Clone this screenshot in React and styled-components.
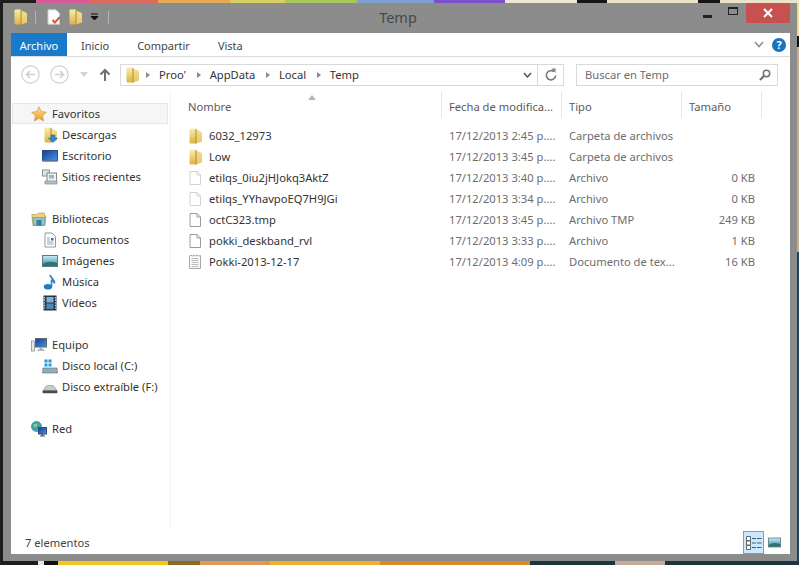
import React from "react";
import styled, { createGlobalStyle } from "styled-components";

const GlobalStyle = createGlobalStyle`
  html, body {
    margin: 0;
    padding: 0;
    background: #222;
  }
  * {
    box-sizing: border-box;
  }
`;

const Desktop = styled.div`
  width: 799px;
  height: 565px;
  overflow: hidden;
  font-family: "Noto Sans", "Open Sans", sans-serif;
  font-size: 11.2px;
  padding: 3px 2px 4px 3px;
  background:
    linear-gradient(90deg, #1d1d1d 0 36px, #d85a9a 36px 90px, #dd6a5c 90px 158px, #e8a85a 158px 230px,
      #d9cf62 230px 285px, #a8c85c 285px 357px, #7f9fd0 357px 434px, #7a4fc8 434px 505px,
      #ece8d4 505px 577px, #151515 577px 607px, #ece4c8 607px 698px, #151515 698px 720px, #ece4c8 720px)
      top / 100% 3px no-repeat,
    linear-gradient(90deg, #1d1d1d 0 38px, #e8e8d8 38px 44px, #111 44px 58px, #f2c81c 58px 168px,
      #8a6a20 168px 200px, #e09a50 200px 270px, #eeb030 270px 380px, #d98a28 380px 530px,
      #1c3440 530px 615px, #c8a898 615px 665px, #1c3440 665px)
      bottom / 100% 4px no-repeat,
    linear-gradient(180deg, #e8dc90 0 36px, #111 36px 47px, #c4ac8c 47px 252px, #1c4458 252px)
      right / 2px 100% no-repeat,
    #1d1d1d;
`;

const Window = styled.div`
  height: 100%;
  background: #8c8c8c;
  display: flex;
  flex-direction: column;
  padding: 0 7px 7px 8px;
`;

const TitleBar = styled.div`
  height: 30px;
  flex: none;
  display: grid;
  grid-template-columns: 1fr auto 1fr;
  align-items: start;
`;

const QuickAccess = styled.div`
  display: flex;
  align-items: center;
  height: 30px;
  padding: 0 0 2px 1px;
`;

const QuickSep = styled.span`
  width: 1px;
  height: 13px;
  background: #b4b4b4;
  margin: 0 ${(p) => p.$right}px 0 ${(p) => p.$left}px;
`;

const QuickSlot = styled.span`
  display: flex;
  margin-left: ${(p) => p.$left}px;
`;

const Title = styled.div`
  font-size: 14.5px;
  line-height: 29px;
  padding-right: 5px;
  color: #484848;
`;

const Controls = styled.div`
  display: flex;
  justify-content: flex-end;
  align-items: flex-start;
`;

const ControlButton = styled.div`
  width: ${(p) => p.$w}px;
  height: 20px;
  display: flex;
  align-items: center;
  justify-content: center;
  background: ${(p) => p.$bg || "transparent"};
`;

const MinGlyph = styled.span`
  width: 9px;
  height: 3px;
  background: #222;
  margin-top: 7px;
`;

const MaxGlyph = styled.span`
  width: 10px;
  height: 8px;
  border: 1px solid #222;
  border-top-width: 2px;
  margin-top: -4px;
`;

const Shell = styled.div`
  flex: 1;
  min-height: 0;
  background: #fff;
  display: flex;
  flex-direction: column;
  color: #3a3a3a;
`;

const Ribbon = styled.div`
  height: 24px;
  flex: none;
  display: flex;
  align-items: stretch;
  border-bottom: 1px solid #dadbdc;
`;

const Tab = styled.div`
  width: ${(p) => (p.$active ? "56px" : "auto")};
  padding: 2px ${(p) => (p.$active ? 0 : 14)}px 0;
  line-height: 22px;
  font-size: 11px;
  text-align: center;
  color: ${(p) => (p.$active ? "#fff" : "#444")};
  background: ${(p) => (p.$active ? "#1979ca" : "transparent")};
`;

const RibbonEnd = styled.div`
  margin-left: auto;
  display: flex;
  align-items: center;
  gap: 8px;
  padding-right: 4px;
`;

const HelpBadge = styled.span`
  width: 14px;
  height: 14px;
  border-radius: 50%;
  background: #1a72bd;
  color: #fff;
  font-size: 11px;
  font-weight: 700;
  line-height: 14px;
  text-align: center;
`;

const NavRow = styled.div`
  height: 35px;
  flex: none;
  display: flex;
  align-items: center;
  padding: 0 12px 0 10px;
`;

const NavIcon = styled.svg`
  flex: none;
  width: ${(p) => p.$w}px;
  height: ${(p) => p.$h}px;
  margin-right: ${(p) => p.$gap}px;
`;

const AddressBar = styled.div`
  width: 444px;
  height: 22px;
  border: 1px solid #d9d9d9;
  display: flex;
  align-items: center;
  padding-left: 3px;
  color: #333;
`;

const Crumb = styled.span`
  display: inline-flex;
  align-items: center;
  gap: 9px;
  margin-right: 4.6px;
`;

const CrumbArrow = styled.span`
  width: 0;
  height: 0;
  margin-left: 6px;
  border-left: 4px solid #8a8a8a;
  border-top: 3.5px solid transparent;
  border-bottom: 3.5px solid transparent;
`;

const AddressEnd = styled.div`
  margin-left: auto;
  display: flex;
  align-items: center;
  height: 100%;
`;

const RefreshCell = styled.div`
  width: 26px;
  height: 100%;
  margin-left: 5px;
  border-left: 1px solid #d9d9d9;
  display: flex;
  align-items: center;
  justify-content: center;
`;

const SearchBox = styled.div`
  width: 202px;
  height: 22px;
  margin-left: 12px;
  border: 1px solid #d9d9d9;
  display: flex;
  align-items: center;
  justify-content: space-between;
  padding: 0 6px 0 8px;
  color: #6d6d6d;
`;

const Main = styled.div`
  flex: 1;
  min-height: 0;
  display: flex;
`;

const Sidebar = styled.nav`
  width: 160px;
  flex: none;
  padding: 11px 0 0 1px;
  border-right: 1px solid #f3f3f3;
`;

const NavGroup = styled.div`
  margin-bottom: 21px;
`;

const NavItem = styled.div`
  width: 156px;
  height: 21px;
  display: flex;
  align-items: center;
  gap: ${(p) => (p.$child ? 4 : 5)}px;
  padding-left: ${(p) => (p.$child ? 30 : 19)}px;
  color: #333;
  background: ${(p) => (p.$selected ? "#f5f6f7" : "transparent")};
  box-shadow: ${(p) => (p.$selected ? "inset 0 0 0 1px #e6e6e6" : "none")};
`;

const Content = styled.section`
  flex: 1;
  min-width: 0;
  display: flex;
  flex-direction: column;
`;

const ColumnHeader = styled.div`
  position: relative;
  height: 33px;
  display: grid;
  grid-template-columns: 271px 120px 120px 80px;
  color: #5a5a5a;
`;

const HeaderCell = styled.div`
  height: 26px;
  padding: 7px 0 0 ${(p) => p.$pad}px;
  line-height: 16px;
  border-right: 1px solid #e6e6e6;
`;

const SortMark = styled.svg`
  position: absolute;
  left: 137px;
  top: 3px;
`;

const FileRow = styled.div`
  height: 21px;
  display: grid;
  grid-template-columns: 271px 120px 120px 80px;
  align-items: center;
`;

const NameCell = styled.div`
  display: flex;
  align-items: center;
  gap: 6px;
  padding-left: 16px;
  color: #333;
`;

const InfoCell = styled.div`
  padding-left: 7px;
  color: #6d6d6d;
  white-space: nowrap;
`;

const SizeCell = styled.div`
  padding-right: 7px;
  text-align: right;
  color: #6d6d6d;
`;

const StatusBar = styled.div`
  height: 24px;
  flex: none;
  display: flex;
  align-items: flex-start;
  justify-content: space-between;
  padding: 1px 9px 0 14px;
  color: #444;
`;

const StatusText = styled.span`
  line-height: 24px;
`;

const ViewToggle = styled.div`
  display: flex;
  align-items: center;
  gap: 4px;
`;

const ViewButton = styled.div`
  width: ${(p) => (p.$active ? 21 : 13)}px;
  height: 23px;
  display: flex;
  align-items: center;
  justify-content: center;
  background: ${(p) => (p.$active ? "#cce8ff" : "transparent")};
  box-shadow: ${(p) => (p.$active ? "inset 0 0 0 1px #63a9c9" : "none")};
`;

const Glyph = styled.svg`
  flex: none;
  display: block;
`;

const Defs = styled.svg`
  position: absolute;
  width: 0;
  height: 0;
`;

const SharedGradients = () => (
  <Defs aria-hidden="true">
    <defs>
      <linearGradient id="goldLeft" x1="0" y1="0" x2="0" y2="1">
        <stop offset="0" stopColor="#f9efae" />
        <stop offset="1" stopColor="#dcb243" />
      </linearGradient>
      <linearGradient id="goldRight" x1="0" y1="0" x2="0" y2="1">
        <stop offset="0" stopColor="#f3e08f" />
        <stop offset="1" stopColor="#e5c766" />
      </linearGradient>
      <linearGradient id="screen" x1="0" y1="0" x2="1" y2="1">
        <stop offset="0" stopColor="#123c9c" />
        <stop offset="1" stopColor="#4a94e0" />
      </linearGradient>
      <linearGradient id="photo" x1="0" y1="0" x2="0" y2="1">
        <stop offset="0" stopColor="#d5ecf4" />
        <stop offset="0.55" stopColor="#6fb5c9" />
        <stop offset="1" stopColor="#2f7f80" />
      </linearGradient>
      <linearGradient id="star" x1="0" y1="0" x2="0" y2="1">
        <stop offset="0" stopColor="#ffe48a" />
        <stop offset="1" stopColor="#eb9a2c" />
      </linearGradient>
    </defs>
  </Defs>
);

const FolderShape = () => (
  <>
    <path d="M2.5 1.5 Q2.5 .5 4 .5 H9 V15.5 H4 Q2.5 15.5 2.5 14 Z" fill="url(#goldLeft)" />
    <path d="M9 1.5 L14 3.5 Q15 4 15 5 V13.5 L9 15.5 Z" fill="url(#goldRight)" />
    <path d="M9 1 V15.5" stroke="#b18a2e" strokeWidth="1" />
  </>
);

const PageShape = ({ stroke = "#9c9c9c" }) => (
  <path d="M3 1.5 H10 L13.5 5 V14.5 H3 Z M10 1.5 V5 H13.5" fill="#fff" stroke={stroke} strokeWidth="1" />
);

const icons = {
  folder: <FolderShape />,
  file: <PageShape />,
  faintFile: <PageShape stroke="#d2d2d2" />,
  textFile: (
    <>
      <path d="M2.5 2 L4 1.2 L5.5 2 L7 1.2 L8.5 2 L10 1.2 L11.5 2 L13.5 1.5 V14.5 H2.5 Z" fill="#fafafa" stroke="#a8a8a8" />
      <path d="M4.5 4.5 H11.5 M4.5 6.5 H11.5 M4.5 8.5 H11.5 M4.5 10.5 H11.5 M4.5 12.5 H11.5" stroke="#bdbdbd" />
    </>
  ),
  star: (
    <path
      d="M8 .8 L10.2 5.6 L15.4 6.2 L11.5 9.7 L12.6 15 L8 12.3 L3.4 15 L4.5 9.7 L.6 6.2 L5.8 5.6 Z"
      fill="url(#star)"
      stroke="#c98a3a"
      strokeWidth="0.6"
    />
  ),
  downloads: (
    <>
      <FolderShape />
      <path d="M9 8 H13 V11 H15.5 L11 15.5 L6.5 11 H9 Z" fill="#2f86cf" stroke="#1c5e9c" strokeWidth="0.5" />
    </>
  ),
  desktop: (
    <>
      <rect x="0.5" y="2.5" width="15" height="10" fill="url(#screen)" stroke="#2b4a7e" />
      <rect x="0.5" y="12.5" width="15" height="1.5" fill="#8c9bb0" />
    </>
  ),
  recent: (
    <>
      <rect x="0.5" y="1" width="7" height="6" fill="#dfe4e6" stroke="#8a9294" />
      <rect x="5" y="4" width="9.5" height="8.5" fill="#eef1f2" stroke="#7f8a8c" />
      <rect x="7" y="6" width="5" height="3.5" fill="#9fb4bd" />
      <path d="M3 12 H15 V15 H3 Z" fill="#b9c0c2" stroke="#7f8a8c" strokeWidth="0.7" />
    </>
  ),
  library: (
    <>
      <path d="M.8 3.5 H6 L7.5 2 H13.5 V5 H15 L14 14.5 H2 Z" fill="#ecd27d" stroke="#b89236" strokeWidth="0.6" />
      <path d="M1.8 6.5 H14.2 L13.4 14.5 H2.6 Z" fill="#8fc4d4" stroke="#4f8ea3" strokeWidth="0.6" />
      <rect x="5.5" y="9" width="5" height="5.5" fill="#3d7f93" />
    </>
  ),
  documents: (
    <>
      <path d="M3 1 H10 L13.5 4.5 V15 H3 Z" fill="#fff" stroke="#8d98a0" />
      <path d="M5 6 H8 M5 8 H8 M5 10 H11.5 M5 12 H11.5" stroke="#9aa5ad" />
      <rect x="9" y="6" width="2.5" height="2.5" fill="#2f74b8" />
    </>
  ),
  images: (
    <>
      <rect x="0.5" y="2.5" width="15" height="11" fill="url(#photo)" stroke="#5b7a80" />
      <path d="M1 11 Q6 7 15 10 V13 H1 Z" fill="#2d7572" />
    </>
  ),
  music: (
    <>
      <path d="M8 1 C8.5 4 13 5 12.5 9.5 C12 7.5 10.5 6.5 9.5 6.4 V12.5" fill="none" stroke="#2f86cf" strokeWidth="1.6" />
      <ellipse cx="6" cy="12.7" rx="4.2" ry="2.8" fill="#1f7cc7" />
    </>
  ),
  videos: (
    <>
      <rect x="1.5" y="0.5" width="13" height="15" fill="#26364a" />
      <rect x="4.5" y="2" width="7" height="5.5" fill="#7eb1d6" />
      <rect x="4.5" y="8.5" width="7" height="5.5" fill="#4d87b5" />
      <path d="M2.5 2 V14 M13.5 2 V14" stroke="#c7d3dc" strokeWidth="1.2" strokeDasharray="1.4 1.2" />
    </>
  ),
  computer: (
    <>
      <rect x="0.5" y="4" width="3" height="10" fill="#e4e8ea" stroke="#7c8588" strokeWidth="0.7" />
      <rect x="4.5" y="1.5" width="11" height="8.5" fill="url(#screen)" stroke="#5a6670" />
      <path d="M8.5 10 H11.5 V12.5 H13.5 V14 H6.5 V12.5 H8.5 Z" fill="#a9b2b7" />
    </>
  ),
  localDisk: (
    <>
      <path d="M1 10 H15 L15.5 15 H.5 Z" fill="#a2aaad" stroke="#5f686b" strokeWidth="0.6" />
      <rect x="3" y="12" width="6" height="1.2" fill="#59b8d8" />
      <path d="M2.5 1.5 H5.5 V4.5 H2.5 Z M6.5 1.5 H9.5 V4.5 H6.5 Z M2.5 5.5 H5.5 V8.5 H2.5 Z M6.5 5.5 H9.5 V8.5 H6.5 Z" fill="#1f9be0" />
    </>
  ),
  removable: (
    <>
      <path d="M3.5 8 Q4 6.5 6 6.5 H10 Q12 6.5 12.5 8 L15 11.5 H1 Z" fill="#c9cccd" stroke="#777" strokeWidth="0.5" />
      <rect x="0.5" y="11.5" width="15" height="2.8" rx="1" fill="#4a4a4a" />
    </>
  ),
  network: (
    <>
      <circle cx="5.5" cy="5.5" r="5" fill="#3fa4b4" stroke="#27707e" strokeWidth="0.6" />
      <path d="M2.5 3.5 Q5 2 6.5 4 Q5 6.5 3 6 Z M7 7 L9 8 L7.5 10 Z" fill="#9ad07a" />
      <rect x="7.5" y="6.5" width="8" height="6.5" fill="url(#screen)" stroke="#35506e" />
      <path d="M10.5 13 H12.5 V14.5 H14 V15.5 H9 V14.5 H10.5 Z" fill="#4d5c6b" />
    </>
  ),
  checkDoc: (
    <>
      <path d="M2 .8 H10 L13.5 4.3 V15.2 H2 Z" fill="#fff" stroke="#c9c9c9" />
      <path d="M6.5 11 L8.8 13.5 L14 8" fill="none" stroke="#dd5a2c" strokeWidth="2" />
    </>
  ),
};

const Icon = ({ name, size = 16 }) => (
  <Glyph width={size} height={size} viewBox="0 0 16 16" aria-hidden="true">
    {icons[name]}
  </Glyph>
);

const favorites = [
  { icon: "downloads", label: "Descargas" },
  { icon: "desktop", label: "Escritorio" },
  { icon: "recent", label: "Sitios recientes" },
];

const libraries = [
  { icon: "documents", label: "Documentos" },
  { icon: "images", label: "Imágenes" },
  { icon: "music", label: "Música" },
  { icon: "videos", label: "Vídeos" },
];

const drives = [
  { icon: "localDisk", label: "Disco local (C:)" },
  { icon: "removable", label: "Disco extraíble (F:)" },
];

const files = [
  { icon: "folder", name: "6032_12973", date: "17/12/2013 2:45 p....", type: "Carpeta de archivos", size: "" },
  { icon: "folder", name: "Low", date: "17/12/2013 3:45 p....", type: "Carpeta de archivos", size: "" },
  { icon: "faintFile", name: "etilqs_0iu2jHJokq3AktZ", date: "17/12/2013 3:40 p....", type: "Archivo", size: "0 KB" },
  { icon: "faintFile", name: "etilqs_YYhavpoEQ7H9JGi", date: "17/12/2013 3:34 p....", type: "Archivo", size: "0 KB" },
  { icon: "file", name: "octC323.tmp", date: "17/12/2013 3:45 p....", type: "Archivo TMP", size: "249 KB" },
  { icon: "file", name: "pokki_deskband_rvl", date: "17/12/2013 3:33 p....", type: "Archivo", size: "1 KB" },
  { icon: "textFile", name: "Pokki-2013-12-17", date: "17/12/2013 4:09 p....", type: "Documento de tex...", size: "16 KB" },
];

const NavTree = ({ icon, label, selected, items = [] }) => (
  <NavGroup>
    <NavItem $selected={selected}>
      <Icon name={icon} />
      {label}
    </NavItem>
    {items.map((item) => (
      <NavItem $child key={item.label}>
        <Icon name={item.icon} />
        {item.label}
      </NavItem>
    ))}
  </NavGroup>
);

const CircleArrow = ({ flip, gap }) => (
  <NavIcon $w={19} $h={19} $gap={gap} viewBox="0 0 19 19" aria-hidden="true">
    <circle cx="9.5" cy="9.5" r="8.7" fill="#fff" stroke="#cfcfcf" strokeWidth="1.2" />
    <path
      d={flip ? "M5 9.5 H13.5 M10 6 L13.5 9.5 L10 13" : "M14 9.5 H5.5 M9 6 L5.5 9.5 L9 13"}
      fill="none"
      stroke="#cfcfcf"
      strokeWidth="1.6"
    />
  </NavIcon>
);

const crumbs = ["Proo'", "AppData", "Local", "Temp"];

export default function App() {
  return (
    <Desktop>
      <GlobalStyle />
      <SharedGradients />
      <Window>
        <TitleBar>
          <QuickAccess>
            <Icon name="folder" />
            <QuickSep $left={7} $right={10} />
            <Icon name="checkDoc" />
            <QuickSlot $left={5}>
              <Icon name="folder" />
            </QuickSlot>
            <QuickSlot $left={7}>
              <Glyph width="9" height="8" viewBox="0 0 9 8" aria-hidden="true">
                <path d="M1 1 H8 M1 3.5 H8 L4.5 7 Z" fill="#111" stroke="#111" />
              </Glyph>
            </QuickSlot>
            <QuickSep $left={9} $right={0} />
          </QuickAccess>
          <Title>Temp</Title>
          <Controls>
            <ControlButton $w={26}>
              <MinGlyph />
            </ControlButton>
            <ControlButton $w={26}>
              <MaxGlyph />
            </ControlButton>
            <ControlButton $w={44} $bg="#c75050">
              <svg width="10" height="10" viewBox="0 0 10 10" aria-hidden="true">
                <path d="M1 1 L9 9 M9 1 L1 9" stroke="#fff" strokeWidth="2" />
              </svg>
            </ControlButton>
          </Controls>
        </TitleBar>
        <Shell>
          <Ribbon>
            <Tab $active>Archivo</Tab>
            <Tab>Inicio</Tab>
            <Tab>Compartir</Tab>
            <Tab>Vista</Tab>
            <RibbonEnd>
              <svg width="10" height="7" viewBox="0 0 10 7" aria-hidden="true">
                <path d="M1 1 L5 5.5 L9 1" fill="none" stroke="#8c8c8c" strokeWidth="1.5" />
              </svg>
              <HelpBadge>?</HelpBadge>
            </RibbonEnd>
          </Ribbon>
          <NavRow>
            <CircleArrow gap={10} />
            <CircleArrow flip gap={11} />
            <NavIcon $w={8} $h={5} $gap={10} viewBox="0 0 8 5" aria-hidden="true">
              <path d="M0 0 H8 L4 5 Z" fill="#d4d4d4" />
            </NavIcon>
            <NavIcon $w={14} $h={14} $gap={8} viewBox="0 0 14 14" aria-hidden="true">
              <path d="M7 13 V2 M2.5 6.5 L7 2 L11.5 6.5" fill="none" stroke="#6f6f6f" strokeWidth="2" />
            </NavIcon>
            <AddressBar>
              <Icon name="folder" />
              {crumbs.map((crumb) => (
                <Crumb key={crumb}>
                  <CrumbArrow />
                  {crumb}
                </Crumb>
              ))}
              <AddressEnd>
                <svg width="9" height="6" viewBox="0 0 9 6" aria-hidden="true">
                  <path d="M1 1 L4.5 5 L8 1" fill="none" stroke="#555" strokeWidth="1.5" />
                </svg>
                <RefreshCell>
                  <svg width="12" height="13" viewBox="0 0 12 13" aria-hidden="true">
                    <path d="M8.8 3.6 A4.6 4.6 0 1 0 10.6 7.5" fill="none" stroke="#7a7a7a" strokeWidth="1.6" />
                    <path d="M6.5 0.5 L10.5 0.5 L10.5 5 Z" fill="#7a7a7a" />
                  </svg>
                </RefreshCell>
              </AddressEnd>
            </AddressBar>
            <SearchBox>
              Buscar en Temp
              <svg width="12" height="12" viewBox="0 0 12 12" aria-hidden="true">
                <circle cx="7.5" cy="4.5" r="3.2" fill="none" stroke="#6f6f6f" strokeWidth="1.5" />
                <path d="M5.2 6.8 L1 11" stroke="#6f6f6f" strokeWidth="2.2" />
              </svg>
            </SearchBox>
          </NavRow>
          <Main>
            <Sidebar>
              <NavTree icon="star" label="Favoritos" selected items={favorites} />
              <NavTree icon="library" label="Bibliotecas" items={libraries} />
              <NavTree icon="computer" label="Equipo" items={drives} />
              <NavTree icon="network" label="Red" />
            </Sidebar>
            <Content>
              <ColumnHeader>
                <HeaderCell $pad={17}>Nombre</HeaderCell>
                <HeaderCell $pad={7}>Fecha de modifica...</HeaderCell>
                <HeaderCell $pad={7}>Tipo</HeaderCell>
                <HeaderCell $pad={7}>Tamaño</HeaderCell>
                <SortMark width="8" height="5" viewBox="0 0 8 5" aria-hidden="true">
                  <path d="M0 5 L4 0 L8 5 Z" fill="#b5b5b5" />
                </SortMark>
              </ColumnHeader>
              {files.map((file) => (
                <FileRow key={file.name}>
                  <NameCell>
                    <Icon name={file.icon} />
                    {file.name}
                  </NameCell>
                  <InfoCell>{file.date}</InfoCell>
                  <InfoCell>{file.type}</InfoCell>
                  <SizeCell>{file.size}</SizeCell>
                </FileRow>
              ))}
            </Content>
          </Main>
          <StatusBar>
            <StatusText>7 elementos</StatusText>
            <ViewToggle>
              <ViewButton $active>
                <svg width="16" height="14" viewBox="0 0 16 14" aria-hidden="true">
                  <path d="M.5 .5 H4.5 V4.5 H.5 Z M.5 5 H4.5 V9 H.5 Z M.5 9.5 H4.5 V13.5 H.5 Z" fill="#fff" stroke="#5d6a70" />
                  <path d="M6 2.5 H10 M11 2.5 H15.5 M6 7 H10 M11 7 H15.5 M6 11.5 H10 M11 11.5 H15.5" stroke="#4c5a60" />
                </svg>
              </ViewButton>
              <ViewButton>
                <Icon name="images" size={13} />
              </ViewButton>
            </ViewToggle>
          </StatusBar>
        </Shell>
      </Window>
    </Desktop>
  );
}
